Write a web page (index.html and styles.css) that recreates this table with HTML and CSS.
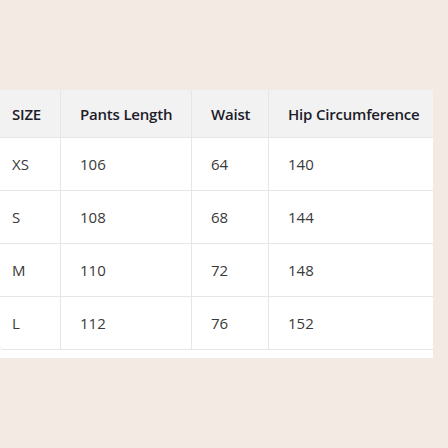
FILE: index.html
```html
<!DOCTYPE html>
<html>
<head>
<meta charset="utf-8">
<link rel="stylesheet" href="styles.css">
</head>
<body>
<div class="page">
  <div class="wrap">
    <table class="sizes">
      <colgroup>
        <col class="c1"><col class="c2"><col class="c3"><col class="c4">
      </colgroup>
      <thead>
        <tr><th>SIZE</th><th>Pants Length</th><th>Waist</th><th>Hip Circumference</th></tr>
      </thead>
      <tbody>
        <tr><td>XS</td><td>106</td><td>64</td><td>140</td></tr>
        <tr><td>S</td><td>108</td><td>68</td><td>144</td></tr>
        <tr><td>M</td><td>110</td><td>72</td><td>148</td></tr>
        <tr><td>L</td><td>112</td><td>76</td><td>152</td></tr>
      </tbody>
    </table>
  </div>
</div>
</body>
</html>
```
FILE: styles.css
```css
html, body {
  margin: 0;
  padding: 0;
  background: #f2eae3;
}
body {
  font-family: "Open Sans", "Noto Sans", sans-serif;
  font-size: 15px;
}
.page {
  padding-top: 90px;
  width: 448px;
  height: 448px;
  box-sizing: border-box;
}
.wrap {
  width: 433px;
  background: #ffffff;
  padding-bottom: 8px;
}
.sizes {
  width: 433px;
  border-collapse: separate;
  border-spacing: 0;
  table-layout: fixed;
  border-bottom: 1px solid #e6e6e6;
  border-bottom-left-radius: 4px;
}
.c1 { width: 61px; }
.c2 { width: 131px; }
.c3 { width: 77px; }
.c4 { width: 164px; }
th, td {
  text-align: left;
  padding: 0 0 0 19px;
  border-right: 1px solid #e6e6e6;
  border-bottom: 1px solid #e6e6e6;
  white-space: nowrap;
}
th:last-child, td:last-child { border-right: none; }
tbody tr:last-child td { border-bottom: none; }
th:first-child, td:first-child { padding-left: 12px; }
th {
  height: 47px;
  background: #f2f2f2;
  color: #1c1c2a;
  font-weight: 600;
  font-size: 15px;
  letter-spacing: -0.2px;
}
td {
  height: 52px;
  color: #3a3a3a;
  font-weight: 400;
}
```
